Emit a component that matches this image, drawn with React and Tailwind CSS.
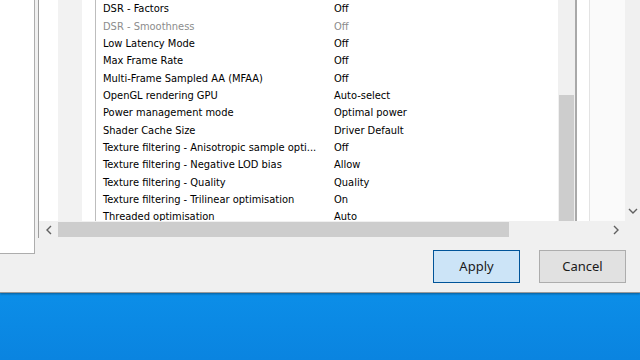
const rows = [
  ["DSR - Factors", "Off"],
  ["DSR - Smoothness", "Off", true],
  ["Low Latency Mode", "Off"],
  ["Max Frame Rate", "Off"],
  ["Multi-Frame Sampled AA (MFAA)", "Off"],
  ["OpenGL rendering GPU", "Auto-select"],
  ["Power management mode", "Optimal power"],
  ["Shader Cache Size", "Driver Default"],
  ["Texture filtering - Anisotropic sample opti...", "Off"],
  ["Texture filtering - Negative LOD bias", "Allow"],
  ["Texture filtering - Quality", "Quality"],
  ["Texture filtering - Trilinear optimisation", "On"],
  ["Threaded optimisation", "Auto"],
];

const Chevron = ({ dir }) => {
  const d = {
    left: "M6 1 L2 5 L6 9",
    right: "M2 1 L6 5 L2 9",
    down: "M1 2 L5 6 L9 2",
  }[dir];
  const w = dir === "down" ? 10 : 8;
  const h = dir === "down" ? 8 : 10;
  return (
    <svg width={w} height={h} viewBox={`0 0 ${w} ${h}`}>
      <path d={d} fill="none" stroke="#606060" strokeWidth="1.4" />
    </svg>
  );
};

const App = () => {
  return (
    <div className="w-[640px] h-[360px] overflow-hidden flex flex-col font-['DejaVu_Sans_Condensed','DejaVu_Sans',sans-serif] text-[11px]">
      {/* window */}
      <div className="h-[293px] bg-[#f0f0f0] flex border-b border-[#9a9a9a] shadow-[0_1px_2px_rgba(0,0,0,0.35)] relative z-10">
        {/* tree panel */}
        <div className="w-[35px] h-[254px] bg-white border-r border-b border-[#adadad] shrink-0" />

        <div className="flex-1 flex flex-col">
          {/* content frame */}
          <div className="h-[238px] pl-[3px] flex">
            <div className="flex-1 flex flex-col border-l border-[#9d9d9d] bg-white">
              <div className="h-[221px] flex">
                <div className="flex-1 flex">
                  <div className="w-[19px] bg-white" />
                  <div className="w-[24px] bg-[#f2f2f2]" />
                  <div className="w-[13px] bg-white" />
                  {/* list box */}
                  <div className="w-[482px] flex border-l border-[#bdbdbd] border-r-2 border-r-[#a9a9a9]">
                    <div className="flex-1 overflow-hidden">
                      <div className="mt-[1px]">
                        {rows.map(([label, value, dim]) => (
                          <div
                            key={label}
                            className={`h-[17.33px] flex items-center pl-[7px] whitespace-nowrap ${dim ? "text-[#8c8c8c]" : "text-black"}`}
                          >
                            <span className="w-[231px] shrink-0">{label}</span>
                            <span>{value}</span>
                          </div>
                        ))}
                      </div>
                    </div>
                    <div className="w-[17px] flex flex-col bg-[#f0f0f0]">
                      <div className="h-[95px]" />
                      <div className="flex-1 mx-[1px] bg-[#cdcdcd]" />
                    </div>
                  </div>
                  <div className="w-[13px] bg-white border-r border-[#e3e3e3]" />
                  <div className="flex-1 bg-[#fafafa]" />
                </div>
                {/* outer vertical scrollbar */}
                <div className="w-[15px] bg-[#f0f0f0] flex flex-col justify-end items-center pb-[6px]">
                  <Chevron dir="down" />
                </div>
              </div>
              {/* horizontal scrollbar */}
              <div className="h-[17px] flex bg-[#f0f0f0]">
                <div className="w-[19px] flex items-center justify-center">
                  <Chevron dir="left" />
                </div>
                <div className="w-[451px] my-[1px] bg-[#cdcdcd]" />
                <div className="flex-1" />
                <div className="w-[19px] flex items-center justify-center">
                  <Chevron dir="right" />
                </div>
                <div className="w-[15px]" />
              </div>
            </div>
          </div>

          {/* footer buttons */}
          <div className="flex-1 flex justify-end items-start gap-[19px] pt-[12px] pr-[14px] text-[13px] font-['Noto_Sans','DejaVu_Sans',sans-serif]">
            <button className="w-[87px] h-[33px] bg-[#cce4f7] border border-[#005499] text-[#1a1a1a]">
              Apply
            </button>
            <button className="w-[87px] h-[33px] bg-[#e1e1e1] border border-[#adadad] text-[#1a1a1a]">
              Cancel
            </button>
          </div>
        </div>
      </div>

      {/* desktop */}
      <div className="flex-1 bg-gradient-to-b from-[#0c8ee8] to-[#0a84e0]" />
    </div>
  );
};

export default App;
